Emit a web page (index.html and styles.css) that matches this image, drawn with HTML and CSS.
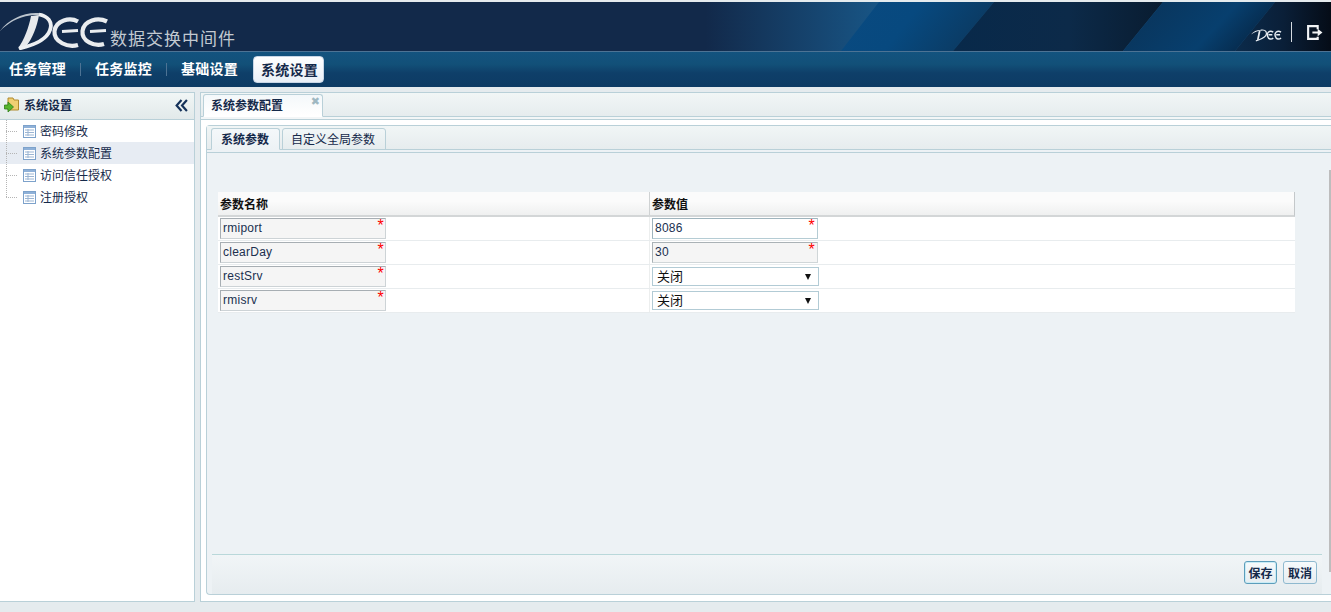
FILE: index.html
```html
<!DOCTYPE html>
<html lang="zh">
<head>
<meta charset="utf-8">
<title>数据交换中间件</title>
<link rel="stylesheet" href="styles.css">
</head>
<body>
<div class="app">
  <header class="banner">
    <svg class="banner-art" viewBox="0 0 1331 49" preserveAspectRatio="none" aria-hidden="true">
      <defs>
        <linearGradient id="g0" x1="0" x2="1" y1="0" y2="0"><stop offset="0" stop-color="#12294a"/><stop offset=".53" stop-color="#12294a"/><stop offset=".66" stop-color="#185585"/><stop offset="1" stop-color="#185585"/></linearGradient>
        <linearGradient id="g1" x1="0" x2="1" y1="0" y2="0.25"><stop offset="0" stop-color="#0a4a80"/><stop offset=".5" stop-color="#07497f"/><stop offset="1" stop-color="#0b3a62"/></linearGradient>
        <linearGradient id="g2" x1="0" x2="1" y1="0" y2="0"><stop offset="0" stop-color="#08294a"/><stop offset=".55" stop-color="#0c2a49"/><stop offset="1" stop-color="#091c30"/></linearGradient>
        <linearGradient id="g3" x1="0" x2="1" y1="0" y2="0.3"><stop offset="0" stop-color="#0a3257"/><stop offset=".7" stop-color="#073f6e"/><stop offset="1" stop-color="#062a4c"/></linearGradient>
        <linearGradient id="g4" x1="0" x2="1" y1="0" y2="0"><stop offset="0" stop-color="#0b2b4b"/><stop offset=".5" stop-color="#0a1f38"/><stop offset="1" stop-color="#050c17"/></linearGradient>
      </defs>
      <rect width="1331" height="49" fill="url(#g0)"/>
      <polygon points="879,0 994,0 953,49 841,49" fill="url(#g1)"/>
      <polygon points="994,0 1163,0 1123,49 953,49" fill="url(#g2)"/>
      <polygon points="1163,0 1275,0 1235,49 1123,49" fill="url(#g3)"/>
      <polygon points="1275,0 1331,0 1331,49 1235,49" fill="url(#g4)"/>
    </svg>
    <div class="brand">
      <svg class="logo" viewBox="0 0 108 38" aria-hidden="true">
        <path d="M0 19C8 8 22 1 36 1C42 1 46 3 48 6C42 3 36 2.500 30 3.500C18 5 8 11 0 19Z" fill="#bcc5ce"/>
        <path d="M31 4L39 3C37 15 32 27 27 33L18 36.500C24 28 29 15 31 4Z" fill="#e6e9ec"/>
        <path d="M39 2.500C48 4 53 10 50 18C47 27 35 33 19 36.500" fill="none" stroke="#eceff2" stroke-width="3.800"/>
        <path d="M78 9.500C70 5 56 8 54.500 19C53.500 30 68 36 78 33" fill="none" stroke="#e9ecef" stroke-width="4.200"/>
        <path d="M107 9.500C98 5 84 8 82.500 19C81.500 29 94 35 104 32" fill="none" stroke="#e9ecef" stroke-width="4.200"/>
        <path d="M62 19.500L78 18.500M90 19.500L106 18.500" stroke="#e9ecef" stroke-width="3"/>
      </svg>
      <span class="brand-name">数据交换中间件</span>
    </div>
    <div class="banner-tools">
      <svg class="mini-logo" viewBox="0 0 32 14" aria-hidden="true">
        <path d="M0 6.500C3 3 7 1.500 11 2C8 2.500 4 3.500 0 6.500Z" fill="#e8edf2"/>
        <path d="M9 2.500L7 12" fill="none" stroke="#e8edf2" stroke-width="1.800"/>
        <path d="M10 2C16 1 17 5 15 8C13 10.500 9 12 5 13" fill="none" stroke="#e8edf2" stroke-width="1.200"/>
        <path d="M23 4C19 1.500 16 5 17 8C18 11.500 21 12 23 10" fill="none" stroke="#e8edf2" stroke-width="1.500"/>
        <path d="M31 4C27 1.500 24 5 25 8C26 11.500 29 12 31 10M18 6.800H22M26 6.800H30" fill="none" stroke="#e8edf2" stroke-width="1.500"/>
      </svg>
      <span class="tool-sep"></span>
      <svg class="exit" viewBox="0 0 16 16" aria-hidden="true">
        <path d="M12 1H1V15H12V12H10V13H3V3H10V5H12Z" fill="#f2f4f6"/>
        <path d="M6 7H11V4.500L15.500 8L11 11.500V9H6Z" fill="#f2f4f6"/>
      </svg>
    </div>
  </header>

  <nav class="nav">
    <a class="nav-item">任务管理</a><span class="nav-sep"></span>
    <a class="nav-item">任务监控</a><span class="nav-sep"></span>
    <a class="nav-item">基础设置</a>
    <a class="nav-item nav-active">系统设置</a>
  </nav>

  <div class="work">
    <aside class="side">
      <div class="side-head">
        <svg class="folder" viewBox="0 0 16 16" aria-hidden="true">
          <path d="M4 1H9L10 3H14.500V13H4Z" fill="#f0cf72" stroke="#b08a2c"/>
          <path d="M0.500 8H4V5L9.500 10L4 15V12H0.500Z" fill="#57b52c" stroke="#2f7d18" stroke-width=".8"/>
        </svg>
        <span class="side-title">系统设置</span>
        <svg class="collapse" viewBox="0 0 12 12" aria-hidden="true">
          <path d="M6 1L1.500 6L6 11M11 1L6.500 6L11 11" fill="none" stroke="#15325a" stroke-width="2"/>
        </svg>
      </div>
      <ul class="tree">
        <li class="tree-row"><span class="dots"></span><svg class="doc" viewBox="0 0 13 13" aria-hidden="true"><rect x=".5" y=".5" width="12" height="12" fill="#fff" stroke="#7da2cb"/><rect x="1" y="1" width="11" height="2" fill="#8fb1d8"/><path d="M2 5H11M2 7.500H11M2 10H11M5 4V11" stroke="#9bb5d3"/></svg><span>密码修改</span></li>
        <li class="tree-row tree-selected"><span class="dots"></span><svg class="doc" viewBox="0 0 13 13" aria-hidden="true"><rect x=".5" y=".5" width="12" height="12" fill="#fff" stroke="#7da2cb"/><rect x="1" y="1" width="11" height="2" fill="#8fb1d8"/><path d="M2 5H11M2 7.500H11M2 10H11M5 4V11" stroke="#9bb5d3"/></svg><span>系统参数配置</span></li>
        <li class="tree-row"><span class="dots"></span><svg class="doc" viewBox="0 0 13 13" aria-hidden="true"><rect x=".5" y=".5" width="12" height="12" fill="#fff" stroke="#7da2cb"/><rect x="1" y="1" width="11" height="2" fill="#8fb1d8"/><path d="M2 5H11M2 7.500H11M2 10H11M5 4V11" stroke="#9bb5d3"/></svg><span>访问信任授权</span></li>
        <li class="tree-row tree-last"><span class="dots"></span><svg class="doc" viewBox="0 0 13 13" aria-hidden="true"><rect x=".5" y=".5" width="12" height="12" fill="#fff" stroke="#7da2cb"/><rect x="1" y="1" width="11" height="2" fill="#8fb1d8"/><path d="M2 5H11M2 7.500H11M2 10H11M5 4V11" stroke="#9bb5d3"/></svg><span>注册授权</span></li>
      </ul>
    </aside>

    <main class="main">
      <div class="tabs outer-tabs">
        <div class="tab tab-page">系统参数配置<span class="tab-close">✖</span></div>
      </div>
      <div class="tab-rule outer-rule"></div>
      <div class="main-body">
        <section class="panel">
          <div class="tabs inner-tabs">
            <div class="tab tab-on">系统参数</div>
            <div class="tab tab-off">自定义全局参数</div>
          </div>
          <div class="tab-rule inner-rule"></div>
          <div class="panel-body">
            <div class="grid">
              <div class="grid-row grid-head">
                <div class="cell cell-name">参数名称</div>
                <div class="cell cell-value">参数值</div>
              </div>
              <div class="grid-row">
                <div class="cell cell-name"><div class="field field-name">rmiport<i class="req">*</i></div></div>
                <div class="cell cell-value"><div class="field field-edit">8086<i class="req">*</i></div></div>
              </div>
              <div class="grid-row">
                <div class="cell cell-name"><div class="field field-name">clearDay<i class="req">*</i></div></div>
                <div class="cell cell-value"><div class="field field-gray">30<i class="req">*</i></div></div>
              </div>
              <div class="grid-row">
                <div class="cell cell-name"><div class="field field-name">restSrv<i class="req">*</i></div></div>
                <div class="cell cell-value"><div class="pick">关闭<i class="pick-arrow"></i></div></div>
              </div>
              <div class="grid-row">
                <div class="cell cell-name"><div class="field field-name">rmisrv<i class="req">*</i></div></div>
                <div class="cell cell-value"><div class="pick">关闭<i class="pick-arrow"></i></div></div>
              </div>
            </div>
          </div>
          <div class="panel-foot">
            <button class="btn btn-primary">保存</button>
            <button class="btn">取消</button>
          </div>
        </section>
        <span class="scroll-thumb"></span>
      </div>
    </main>
  </div>
</div>
</body>
</html>
```
FILE: styles.css
```css
* { box-sizing: border-box; }
html, body { margin: 0; height: 100%; overflow: hidden; }
body {
  background: #e5ebee;
  font-family: "Liberation Sans", "Noto Sans CJK SC", sans-serif;
  font-size: 12px;
  color: #15294a;
}
.app { display: flex; flex-direction: column; height: 612px; }

.banner {
  position: relative;
  flex: none;
  margin-top: 2px;
  height: 49px;
  display: flex;
  align-items: flex-end;
  justify-content: space-between;
  background: #12294a;
  overflow: hidden;
}
.banner-art { position: absolute; inset: 0; width: 100%; height: 100%; }
.brand { position: relative; display: flex; align-items: flex-start; height: 49px; }
.logo { width: 108px; height: 38px; margin-top: 10px; }
.brand-name {
  margin: 26px 0 0 2px;
  font: 17px/20px "Noto Sans CJK SC", sans-serif;
  letter-spacing: 1px;
  color: #c2c9d1;
}
.banner-tools { position: relative; display: flex; align-items: center; padding: 0 8px 9px 0; }
.mini-logo { width: 31px; height: 14px; margin-top: 5px; }
.tool-sep { width: 1px; height: 20px; margin: 0 14px 0 9px; background: #d5dbe1; }
.exit { width: 17px; height: 17px; }

.nav {
  flex: none;
  height: 36px;
  display: flex;
  align-items: center;
  padding-left: 9px;
  border-top: 1px solid #4d7394;
  background: linear-gradient(#13537f, #125078 35%, #0e3f69 60%, #0d3b64);
}
.nav-item {
  margin-bottom: 3px;
  font: 700 14px/20px "Noto Sans CJK SC", sans-serif;
  letter-spacing: .25px;
  color: #fff;
  white-space: nowrap;
}
.nav-sep { width: 1px; height: 13px; margin: 0 14px; background: #4d7394; }
.nav-active {
  width: 71px;
  height: 27px;
  margin: 0 0 0 15px;
  padding: 2px 0 0 7px;
  border: 1px solid #c8d6e6;
  border-radius: 4px;
  background: linear-gradient(#fff, #e9eff7);
  color: #15294a;
}

.work { flex: 1; min-height: 0; display: flex; gap: 5px; padding: 5px 0 10px; }

.side {
  flex: none;
  width: 195px;
  display: flex;
  flex-direction: column;
  background: #fff;
  border: 1px solid #b9d0d8;
  border-left: 0;
}
.side-head {
  flex: none;
  height: 27px;
  display: flex;
  align-items: center;
  padding: 0 6px 2px 4px;
  border-bottom: 1px solid #b9d0d8;
  background: linear-gradient(#f1f6f6, #e2e9ea);
}
.folder { width: 16px; height: 16px; flex: none; }
.side-title { margin-left: 4px; font: 700 12px/16px "Noto Sans CJK SC", sans-serif; }
.collapse { width: 13px; height: 13px; margin-left: auto; }
.tree { list-style: none; margin: 0; padding: 0; }
.tree-row {
  position: relative;
  height: 22px;
  display: flex;
  align-items: center;
  padding-left: 23px;
  font: 12px/16px "Noto Sans CJK SC", sans-serif;
}
.tree-selected { background: #e7ecf3; }
.doc { width: 13px; height: 13px; flex: none; margin-right: 4px; }
.dots {
  position: absolute;
  left: 6px;
  top: 0;
  width: 11px;
  height: 100%;
  background:
    repeating-linear-gradient(to bottom, #b5b5b5 0 1px, transparent 1px 2px) left top / 1px 100% no-repeat,
    repeating-linear-gradient(to right, #b5b5b5 0 1px, transparent 1px 2px) left 11px / 100% 1px no-repeat;
}
.tree-last .dots { height: 12px; }

.main {
  flex: 1;
  min-width: 0;
  display: flex;
  flex-direction: column;
  background: #fff;
  border: 1px solid #b9d0d8;
  border-right: 0;
}
.tabs {
  flex: none;
  display: flex;
  align-items: flex-end;
  background: linear-gradient(#f1f6f6, #e6ecee);
}
.outer-tabs {
  height: 24px;
  padding-left: 2px;
  border-bottom: 1px solid #b9d0d8;
}
.tab-rule { flex: none; height: 3px; border-bottom: 1px solid #b9d0d8; }
.outer-rule { background: #f3f6f7; }
.inner-rule { background: #edf2f5; }
.tab {
  position: relative;
  margin-bottom: -1px;
  border: 1px solid #b9d0d8;
  border-radius: 3px 3px 0 0;
  font: 12px/16px "Noto Sans CJK SC", sans-serif;
  white-space: nowrap;
}
.tab-page {
  width: 120px;
  height: 23px;
  padding: 2px 0 0 7px;
  font-weight: 700;
  background: linear-gradient(#f4f8fa, #fff);
  border-bottom-color: #fff;
}
.tab-close {
  position: absolute;
  right: 2px;
  top: 1px;
  font: 11px/12px "DejaVu Sans", sans-serif;
  color: #9fb8c2;
}
.main-body { position: relative; flex: 1; min-height: 0; display: flex; padding: 5px 0 6px 5px; }
.scroll-thumb { position: absolute; right: 0; top: 50px; width: 2px; height: 402px; background: #bdbdbd; }
.panel {
  flex: 1;
  min-width: 0;
  display: flex;
  flex-direction: column;
  border: 1px solid #b9d0d8;
  border-right: 0;
  border-radius: 4px 0 0 4px;
  background: #edf2f5;
}
.inner-tabs {
  height: 24px;
  gap: 2px;
  padding-left: 4px;
  border-bottom: 1px solid #b9d0d8;
}
.tab-on {
  width: 69px;
  height: 22px;
  padding: 2px 0 0 9px;
  font-weight: 700;
  background: linear-gradient(#f4f8fa, #edf2f5);
  border-bottom-color: #edf2f5;
}
.tab-off {
  width: 104px;
  height: 22px;
  padding: 2px 0 0 8px;
  background: linear-gradient(#f1f6f7, #e6ecee);
}
.panel-body {
  flex: 1;
  min-height: 0;
  padding: 39px 0 0 11px;
}
.grid { width: 1077px; background: #fff; }
.grid-row { display: flex; height: 24px; border-bottom: 1px solid #e8ecee; }
.grid-head {
  height: 25px;
  border-bottom: 2px solid #d3d6d7;
  background: linear-gradient(#fbfbfb, #fbfbfb 40%, #eff0f0);
  border-right: 1px solid #c4c8ca;
  color: #111;
  font: 700 12px/23px "Noto Sans CJK SC", sans-serif;
}
.cell { padding: 1px 2px; }
.cell-name { width: 431px; flex: none; }
.cell-value { flex: 1; border-left: 1px solid #eceeee; }
.grid-head .cell { padding: 0 2px; }
.grid-head .cell-value { border-left: 1px solid #cfd2d3; }
.field {
  position: relative;
  width: 166px;
  height: 21px;
  padding-left: 2px;
  border: 1px solid #cdd3d6;
  border-top: 1px solid #a7aeb3;
  border-left: 1px solid #a7aeb3;
  background: #f5f5f5;
  font: 12px/19px "Liberation Sans", sans-serif;
  letter-spacing: .25px;
  color: #20304f;
}
.field-edit { background: #fff; border-color: #b5ccd4; border-top-color: #9fb4bd; border-left-color: #9fb4bd; }
.field-gray { border-color: #d0d6d8; border-top-color: #aab2b6; border-left-color: #aab2b6; }
.req {
  position: absolute;
  right: 1px;
  top: 0;
  font: normal 16px/13px "Liberation Sans", sans-serif;
  color: #f00;
}
.cell-value .req { right: 2px; }
.pick {
  position: relative;
  width: 167px;
  height: 19px;
  margin-top: 1px;
  padding-left: 4px;
  border: 1px solid #b2cbd5;
  background: #fff;
  font: 13px/15px "Noto Sans CJK SC", sans-serif;
  color: #111;
}
.pick-arrow {
  position: absolute;
  right: 7px;
  top: 6px;
  width: 0;
  height: 0;
  border-left: 3px solid transparent;
  border-right: 3px solid transparent;
  border-top: 6px solid #111;
}
.panel-foot {
  flex: none;
  height: 40px;
  margin: 0 9px 0 5px;
  display: flex;
  justify-content: flex-end;
  align-items: flex-start;
  gap: 6px;
  padding: 6px 5px 0 0;
  border-top: 1px solid #b9d8da;
  background: linear-gradient(#f1f5f7, #e6ecef);
}
.btn {
  width: 34px;
  height: 23px;
  padding: 0;
  border: 1px solid #8fb9cf;
  border-radius: 3px;
  background: linear-gradient(#f7fafc, #e6edf1);
  font: 700 12px/20px "Noto Sans CJK SC", sans-serif;
  color: #15294a;
}
.btn-primary {
  width: 33px;
  border: 1px solid #5c9dbb;
  box-shadow: inset 0 0 0 1px #c9ecf6;
}
```
